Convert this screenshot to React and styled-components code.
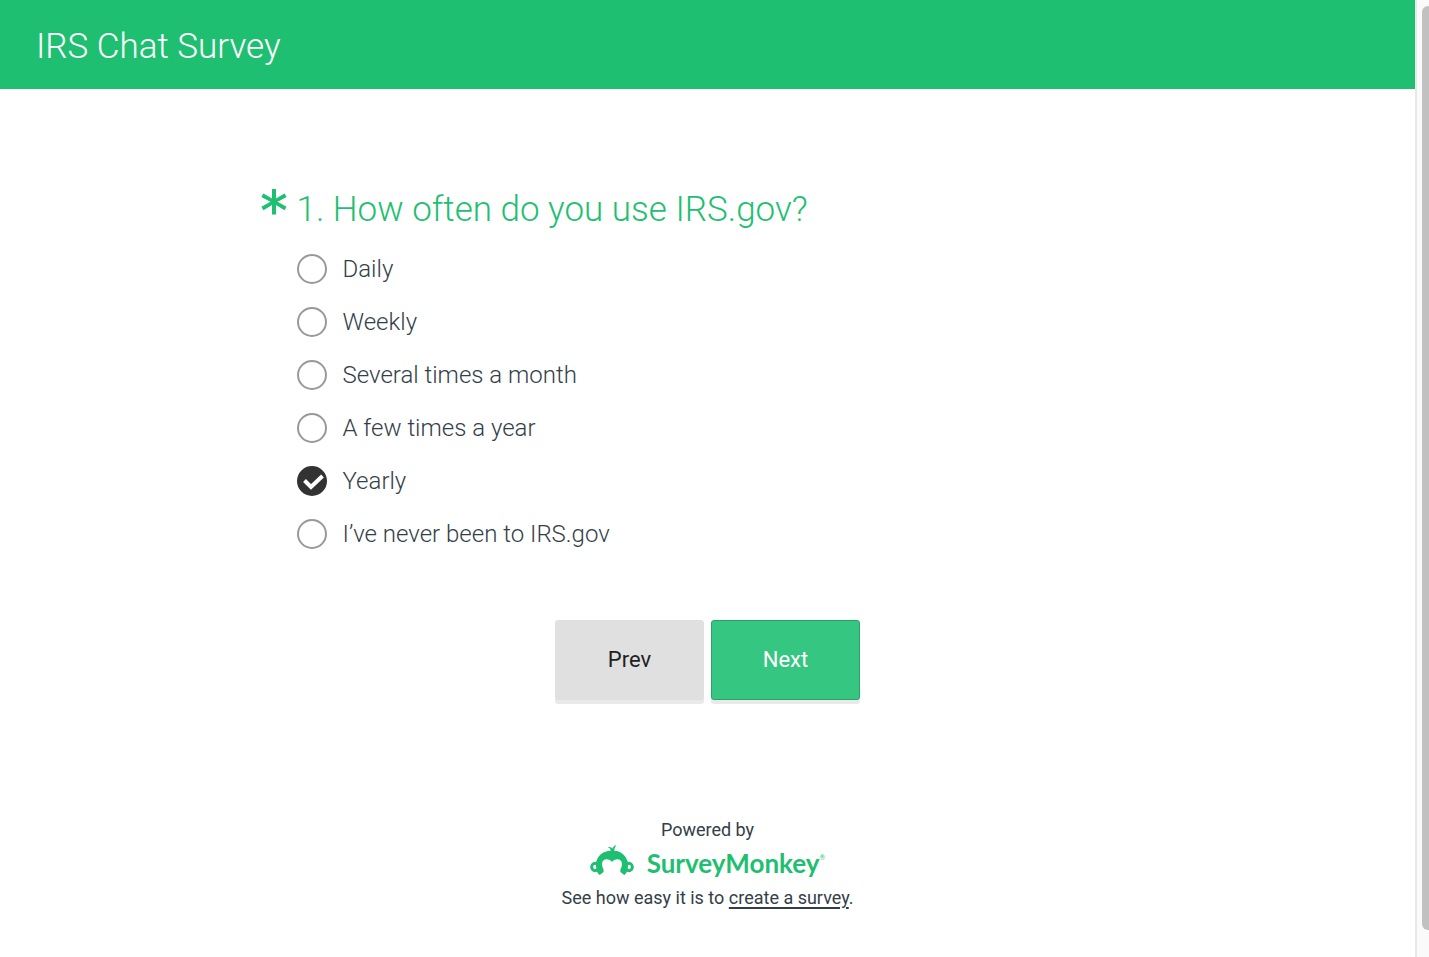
import React, { useState } from 'react';
import styled, { createGlobalStyle } from 'styled-components';

const GlobalStyle = createGlobalStyle`
	:root {
		--green: #1fbf72;
		--text: #333e48;
	}
	* {
		box-sizing: border-box;
	}
	body {
		margin: 0;
		background: #fff;
		color: var(--text);
		font-family: Roboto, 'Liberation Sans', sans-serif;
	}
`;

const Shell = styled.div`
	display: flex;
	min-height: 100vh;
`;

const Page = styled.div`
	flex: 1;
	min-width: 0;
`;

const Header = styled.header`
	background: var(--green);
	padding: 26px 36px 22px;
	h1 {
		margin: 0;
		color: #fff;
		font-size: 35px;
		font-weight: 300;
		line-height: 41px;
	}
`;

const Form = styled.form`
	max-width: 894px;
	margin: 0 auto;
	padding: 96px 0 0;
`;

const Question = styled.fieldset`
	margin: 0;
	padding: 0 36px;
	border: 0;
`;

const Title = styled.legend`
	display: flex;
	margin: 0 0 6px -36px;
	padding: 0;
	color: var(--green);
	font-size: 35px;
	font-weight: 300;
	line-height: 50px;
`;

const Required = styled.span`
	width: 36px;
	flex: none;
	font-family: 'DejaVu Sans', sans-serif;
	font-size: 54px;
	font-weight: 400;
	line-height: 51px;
	-webkit-text-stroke: 1px var(--green);
`;

const Option = styled.label`
	display: flex;
	align-items: center;
	gap: 16px;
	height: 53px;
	font-size: 24px;
	font-weight: 300;
	cursor: pointer;
`;

const Radio = styled.span`
	display: grid;
	flex: none;
	width: 30px;
	height: 30px;
	input,
	svg {
		grid-area: 1 / 1;
		width: 30px;
		height: 30px;
	}
	input {
		appearance: none;
		margin: 0;
		border: 2px solid #999;
		border-radius: 50%;
		background: #fff;
		cursor: pointer;
	}
	input:checked {
		border-color: #333;
		background: #333;
	}
	svg {
		z-index: 1;
		pointer-events: none;
		visibility: hidden;
	}
	input:checked + svg {
		visibility: visible;
	}
`;

const Actions = styled.div`
	display: flex;
	justify-content: center;
	gap: 7px;
	margin-top: 60px;
`;

const Button = styled.button`
	width: 149px;
	height: 80px;
	padding: 0 0 2px;
	border: 1px solid ${props => (props.$primary ? '#27a268' : '#e0e0e0')};
	border-radius: 3px;
	background: ${props => (props.$primary ? '#35c681' : '#e0e0e0')};
	box-shadow: 0 4px 0 #e9e9e9;
	color: ${props => (props.$primary ? '#fff' : '#222')};
	font-family: inherit;
	font-size: 22px;
	cursor: pointer;
`;

const Footer = styled.footer`
	display: flex;
	flex-direction: column;
	align-items: center;
	padding: 118px 0 44px;
	font-size: 18px;
	line-height: 24px;
	p {
		margin: 0;
	}
	p a {
		color: inherit;
		text-underline-offset: 3px;
		text-decoration-thickness: 2px;
	}
`;

const Brand = styled.a`
	display: flex;
	align-items: flex-start;
	gap: 13px;
	height: 44px;
	padding-top: 3px;
	color: var(--green);
	text-decoration: none;
	span {
		display: flex;
		font-family: Lato, sans-serif;
		font-size: 26px;
		font-weight: 700;
		line-height: 36px;
	}
	sup {
		font-size: 7px;
		font-weight: 400;
		line-height: 24px;
	}
`;

const ScrollTrack = styled.div`
	width: 14px;
	flex: none;
	padding: 6px 0 27px 5px;
	border-left: 2px solid #e8e8e8;
	background: #fafafa;
	display: flex;
`;

const ScrollThumb = styled.div`
	flex: 1;
	border-radius: 6px 0 0 6px;
	background: #c1c1c1;
`;

const options = [
	'Daily',
	'Weekly',
	'Several times a month',
	'A few times a year',
	'Yearly',
	'I’ve never been to IRS.gov'
];

function Monkey() {
	return (
		<svg width="44" height="30" viewBox="0 0 132 90" fill="currentColor" aria-hidden="true">
			<path d="M17 56C22 32 39 17 62 17C62 12 59 9 53 7C60 4 65 7 67 11C69 6 73 2 79 0C75 6 73 12 73 17C94 18 110 32 115 56L112 75C111 81 108 86 103 90L92 82C88 75 96 68 96 58C96 48 90 43 82 43C76 43 70 46 66 51C62 46 56 43 50 43C42 43 36 48 36 58C36 68 44 75 40 82L29 90C24 86 21 81 20 75Z" />
			<ellipse cx="15" cy="66" rx="10" ry="11" fill="none" stroke="currentColor" strokeWidth="9" />
			<ellipse cx="117" cy="66" rx="10" ry="11" fill="none" stroke="currentColor" strokeWidth="9" />
		</svg>
	);
}

function App() {
	const [answer, setAnswer] = useState('Yearly');

	return (
		<Shell>
			<GlobalStyle />
			<Page>
				<Header>
					<h1>IRS Chat Survey</h1>
				</Header>
				<main>
					<Form onSubmit={e => e.preventDefault()}>
						<Question>
							<Title>
								<Required>*</Required>
								<span>1. How often do you use IRS.gov?</span>
							</Title>
							{options.map(option => (
								<Option key={option}>
									<Radio>
										<input
											type="radio"
											name="frequency"
											value={option}
											checked={answer === option}
											onChange={() => setAnswer(option)}
										/>
										<svg viewBox="0 0 30 30" fill="none" stroke="#fff" strokeWidth="4">
											<path d="M7.5 14.5L14 21L25.5 10" />
										</svg>
									</Radio>
									{option}
								</Option>
							))}
						</Question>
						<Actions>
							<Button type="button">Prev</Button>
							<Button type="submit" $primary>
								Next
							</Button>
						</Actions>
					</Form>
				</main>
				<Footer>
					<p>Powered by</p>
					<Brand href="#surveymonkey">
						<Monkey />
						<span>
							SurveyMonkey
							<sup>®</sup>
						</span>
					</Brand>
					<p>
						See how easy it is to <a href="#create">create a survey</a>.
					</p>
				</Footer>
			</Page>
			<ScrollTrack>
				<ScrollThumb />
			</ScrollTrack>
		</Shell>
	);
}

export default App;
